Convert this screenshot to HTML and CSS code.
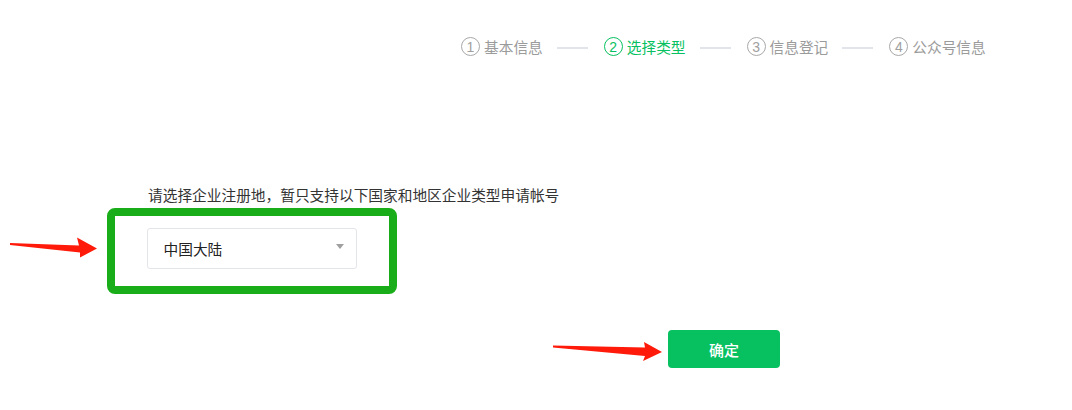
FILE: index.html
```html
<!DOCTYPE html>
<html lang="zh-CN">
<head>
<meta charset="utf-8">
<title>选择类型</title>
<link rel="stylesheet" href="styles.css">
</head>
<body>
<div class="page">
  <div class="steps">
    <div class="step"><span class="num">1</span><span class="label">基本信息</span></div>
    <span class="sep"></span>
    <div class="step active"><span class="num">2</span><span class="label">选择类型</span></div>
    <span class="sep"></span>
    <div class="step"><span class="num">3</span><span class="label">信息登记</span></div>
    <span class="sep"></span>
    <div class="step"><span class="num">4</span><span class="label">公众号信息</span></div>
  </div>

  <p class="desc">请选择企业注册地，暂只支持以下国家和地区企业类型申请帐号</p>

  <div class="region-row">
    <svg class="arrow-left" width="107" height="86" viewBox="0 0 107 86">
      <polygon points="10,35 79,37.5 77,29.5 97,40.5 80,49.5 80,44.5 10,37" fill="#ff1a0a"/>
    </svg>
    <div class="highlight">
      <div class="select">
        <span class="select-value">中国大陆</span>
        <span class="caret"></span>
      </div>
    </div>
  </div>

  <div class="actions">
    <svg class="arrow-right" width="128" height="38" viewBox="0 0 128 38">
      <polygon points="13,15.5 105,17.5 104,12 122,22 103,31 105,26 13,17.5" fill="#ff1a0a"/>
    </svg>
    <button class="btn-primary" type="button">确定</button>
  </div>
</div>
</body>
</html>
```

FILE: styles.css
```css
html, body {
  margin: 0;
  padding: 0;
  background: #ffffff;
}

body {
  font-family: "Noto Sans CJK SC", "Noto Sans", sans-serif;
  color: #333333;
  width: 1072px;
  height: 410px;
  overflow: hidden;
}

.page {
  display: flex;
  flex-direction: column;
}

.steps {
  display: flex;
  align-items: center;
  padding-left: 461px;
  margin-top: 37px;
  height: 19px;
}

.step {
  display: flex;
  align-items: center;
  color: #9b9b9b;
}

.step .num {
  box-sizing: border-box;
  width: 19px;
  height: 19px;
  border: 1px solid #a8a8a8;
  border-radius: 50%;
  display: flex;
  align-items: center;
  justify-content: center;
  font-family: "Liberation Sans", "DejaVu Sans", sans-serif;
  font-size: 14px;
  line-height: 1;
  color: #a0a0a0;
}

.step .label {
  margin-left: 4px;
  font-size: 14.7px;
  line-height: 19px;
}

.step.active .num {
  border-color: #07c160;
  color: #07c160;
}

.step.active .label {
  color: #07c160;
}

.sep {
  width: 31px;
  height: 2px;
  background: #e1e4e8;
  margin: 2px 16px 0 14px;
}

.desc {
  margin: 129px 0 0 148px;
  font-size: 14.7px;
  line-height: 20px;
  height: 20px;
  color: #333333;
}

.region-row {
  display: flex;
  margin-top: 3px;
}

.arrow-left {
  display: block;
  flex: none;
}

.highlight {
  box-sizing: border-box;
  width: 290px;
  height: 86px;
  border: 8.5px solid #1aad1a;
  border-radius: 8px;
  padding: 11.5px 31.5px 0;
}

.select {
  box-sizing: border-box;
  width: 210px;
  height: 41px;
  border: 1px solid #e3e5ea;
  border-radius: 3px;
  display: flex;
  align-items: center;
  justify-content: space-between;
  padding: 0 12px 0 16px;
  background: #ffffff;
}

.select-value {
  font-size: 14.7px;
  color: #222222;
  line-height: 20px;
  margin-top: 1px;
}

.caret {
  width: 0;
  height: 0;
  border-left: 4.5px solid transparent;
  border-right: 4.5px solid transparent;
  border-top: 5px solid #a0a0a0;
  margin-top: -3px;
}

.actions {
  display: flex;
  margin-top: 36px;
  padding-left: 540px;
}

.arrow-right {
  display: block;
  flex: none;
}

.btn-primary {
  box-sizing: border-box;
  width: 112px;
  height: 38px;
  border: none;
  border-radius: 4px;
  background: #07c160;
  color: #ffffff;
  font-family: "Noto Sans CJK SC", "Noto Sans", sans-serif;
  font-size: 15px;
  font-weight: 500;
  padding: 0;
  cursor: pointer;
}
```
